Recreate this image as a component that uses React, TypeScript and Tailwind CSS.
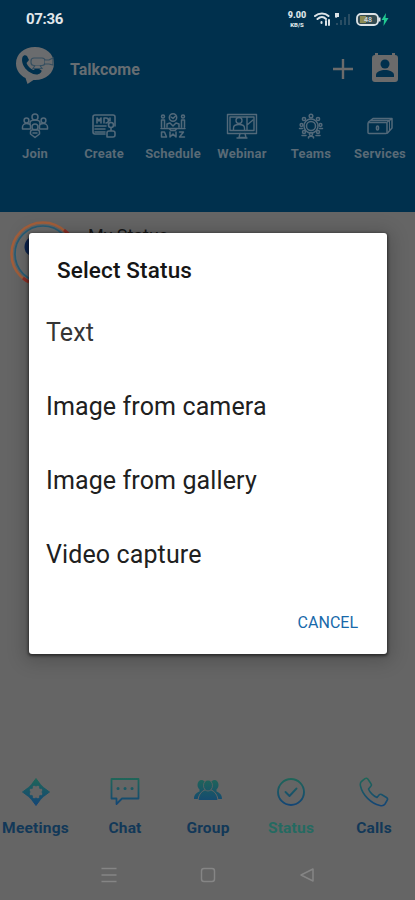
import React from "react";

const stroke = { fill: "none", strokeLinecap: "round", strokeLinejoin: "round" } as const;

function JoinIcon() {
  return (
    <svg className="h-[28px] w-[30px]" viewBox="0 0 30 28" stroke="#52697a" strokeWidth="1.5" {...stroke}>
      <circle cx="15" cy="5" r="3" />
      <path d="M10 12v-1c0-2 2-3 5-3s5 1 5 3v1" />
      <circle cx="6.500" cy="8.500" r="2.400" /><circle cx="23.500" cy="8.500" r="2.400" />
      <path d="M2.500 17v-2c0-2 2-3.500 4-3.500s4 1 4 2.500v3zM19.500 17v-3c0-1.500 2-2.500 4-2.500s4 1.500 4 3.500v2z" />
      <circle cx="15" cy="15" r="3" />
      <path d="M10.500 22v-2c0-1.500 2-2.500 4.500-2.500s4.500 1 4.500 2.500v2L15 25.500zM13 21h4" />
    </svg>
  );
}

function CreateIcon() {
  return (
    <svg className="h-[28px] w-[30px]" viewBox="0 0 30 28" stroke="#52697a" strokeWidth="1.600" {...stroke}>
      <path d="M16 22H6a2 2 0 0 1-2-2V5a2 2 0 0 1 2-2h18a2 2 0 0 1 2 2v9" />
      <path d="M8 11V6l2 3 2-3v5M15 11V6h2a2.500 2.500 0 0 1 0 5M21 6v3M6 14h11M6 17h10M6 20h10" />
      <circle cx="22" cy="13" r="2.500" />
      <path d="M22 16v2M18 25v-4a2 2 0 0 1 2-2h4a2 2 0 0 1 2 2v2a2 2 0 0 1-2 2z" />
    </svg>
  );
}

function ScheduleIcon() {
  return (
    <svg className="h-[28px] w-[30px]" viewBox="0 0 30 28" stroke="#52697a" strokeWidth="1.500" {...stroke}>
      <circle cx="15" cy="5.500" r="3.700" /><path d="M13 5l2 1.500L17.500 4" />
      <circle cx="5" cy="4.500" r="1.500" /><circle cx="25" cy="4.500" r="1.500" />
      <path d="M3.500 15V8h3v7M26.500 15V8h-3v7M9 15v-3l3-1 3 3 3-3 3 1v3M3 16.500h24M11 16.500l2 2h4l2-2" />
      <path d="M3.500 25v-5h3l2 5zM26.500 25h-5l4-5h-4M12 20v5l3-3 3 3v-5" />
    </svg>
  );
}

function WebinarIcon() {
  return (
    <svg className="h-[28px] w-[34px]" viewBox="0 0 34 28" stroke="#52697a" strokeWidth="1.400" {...stroke}>
      <path d="M2.500 2.500h29v19h-29zM5 5h24v13.500H5z" />
      <circle cx="14" cy="8.500" r="3" />
      <path d="M8.500 18v-2c0-2 2-3.500 5.500-3.500s5.500 1.500 5.500 3.500v2M22 13l6-5M22 5v13M15 21.500l-1 4h7l-1-4M12 26h10" />
    </svg>
  );
}

function TeamsIcon() {
  return (
    <svg className="h-[28px] w-[28px]" viewBox="0 0 28 28" stroke="#52697a" strokeWidth="1.500" {...stroke}>
      <circle cx="14" cy="14" r="4.500" /><circle cx="14" cy="14" r="7" />
      <circle cx="14" cy="4" r="1.800" /><circle cx="7" cy="7" r="1.600" /><circle cx="21" cy="7" r="1.600" />
      <circle cx="4.500" cy="13" r="1.400" /><circle cx="23.500" cy="13" r="1.400" />
      <circle cx="7" cy="20" r="1.500" /><circle cx="21" cy="20" r="1.500" /><circle cx="14" cy="22" r="1.600" />
      <path d="M11.500 26v-1l2.500-1 2.500 1v1M2.500 16.500h3M22.500 16.500h3M5 23.500h4M19 23.500h4" />
    </svg>
  );
}

function ServicesIcon() {
  return (
    <svg className="h-[28px] w-[30px]" viewBox="0 0 30 28" stroke="#52697a" strokeWidth="1.500" {...stroke}>
      <rect x="3" y="10.500" width="19" height="11" rx="1" />
      <path d="M3.500 10L8 6.500h19L22.500 10M27 6.500v9.500L22.500 21M6 8.500h18" />
      <path d="M24.500 9v9" strokeWidth="1" />
      <rect x="11.500" y="14" width="2" height="4" rx="1" />
    </svg>
  );
}

const actions = [
  { label: "Join", icon: <JoinIcon /> },
  { label: "Create", icon: <CreateIcon /> },
  { label: "Schedule", icon: <ScheduleIcon /> },
  { label: "Webinar", icon: <WebinarIcon /> },
  { label: "Teams", icon: <TeamsIcon /> },
  { label: "Services", icon: <ServicesIcon /> },
];

function BrandLogo() {
  return (
    <svg className="-mt-[6px] h-[40px] w-[40px]" viewBox="0 0 40 40">
      <path d="M20 1C9 1 1 8 1 17.500c0 6.500 4 12 9.500 14.500L12.500 38l6-4H20c11 0 19-7 19-16.500S31 1 20 1z" fill="#6a6c6e" />
      <path d="M7.500 11c1-2 3-2.500 4.500-1l2 4-2.500 3c1 3 4 6 7 7l3.500-2.500 4.500 3c.5 1.500-2 4-5 4C13 28 5 18.500 7.500 11z" fill="#00304d" />
      <g fill="#6a6c6e" stroke="#354f60" strokeWidth="1.200"><rect x="16" y="12" width="14" height="7.500" rx="3" /><path d="M30 14h4l4-2v7l-4-1h-4M20 19.500l-2 3h9l-2-3" /></g>
    </svg>
  );
}

function StatusBar() {
  return (
    <div className="flex h-[38px] items-center justify-between pl-[26px] pr-[26px]">
      <span className="text-[15px] font-bold tracking-[-0.3px] text-[#e0e7eb]">07:36</span>
      <div className="flex items-center">
        <div className="mr-[7px] flex w-[20px] flex-col items-center font-black text-[#dce3e7]">
          <span className="text-[9px] leading-[11px]">9.00</span>
          <span className="text-[6px] leading-[7px]">KB/S</span>
        </div>
        <svg className="h-[18px] w-[75px]" viewBox="0 0 75 18">
          <g fill="none" stroke="#dce3e7" strokeWidth="2" strokeLinecap="round">
            <path d="M1 6c4-3.500 10-3.500 13.500 0M3.500 9c3-2.500 6-2.500 8.500 0M7.500 12v1M12 11v4M15 10v5" />
          </g>
          <path d="M21 3h4v4h-1.500L22 8l-1-1z" fill="#dce3e7" />
          <path d="M23 15v-2M27 15v-5M31 15V7M35 15V4" stroke="#294d63" strokeWidth="2" />
          <rect x="43" y="4" width="21" height="11" rx="4" fill="#344c52" stroke="#dce3e7" strokeWidth="1.800" />
          <path d="M46 6h6v7h-6z" fill="#8b8b55" />
          <text x="50" y="12.300" fill="#c9d0d1" fontFamily="Roboto" fontWeight="700" fontSize="7">48</text>
          <path d="M65.500 7.500v4" stroke="#dce3e7" strokeWidth="2" />
          <path d="M72 3l-4.500 7H70l-.5 6 5-8h-3z" fill="#20c991" />
        </svg>
      </div>
    </div>
  );
}

function Header() {
  return (
    <header className="h-[212px] bg-[#00304d]">
      <StatusBar />
      <div className="flex h-[61px] items-center pl-[15px] pr-[16px]">
        <BrandLogo />
        <h1 className="ml-[15px] mt-[2px] flex-1 text-[16px] font-bold leading-5 text-[#666d72]">Talkcome</h1>
        <svg className="mr-[17px] h-[22px] w-[22px]" viewBox="0 0 22 22"><path d="M1 11h20M11 1v20" stroke="#6b6b6b" strokeWidth="2.400" /></svg>
        <svg className="-mt-[2px] h-[31px] w-[28px]" viewBox="0 0 28 31">
          <path d="M4 3V1h3v2h14V1h3v2a3 3 0 0 1 3 3v21a3 3 0 0 1-3 3H4a3 3 0 0 1-3-3V6a3 3 0 0 1 3-3z" fill="#6b6b6b" />
          <circle cx="14" cy="12" r="4.500" fill="#00304d" /><path d="M5 25v-2c0-3.500 5-5 9-5s9 1.500 9 5v2z" fill="#00304d" />
        </svg>
      </div>
      <nav className="grid grid-cols-[repeat(6,69px)] pt-[13px]">
        {actions.map((action) => (
          <div key={action.label} className="flex flex-col items-center gap-[6px] pl-px">
            {action.icon}
            <span className="whitespace-nowrap text-[13px] font-bold leading-4 tracking-[0.2px] text-[#596a76]">{action.label}</span>
          </div>
        ))}
      </nav>
    </header>
  );
}

const teal = "url(#tab-gradient)";
const tabs = [
  {
    label: "Meetings",
    color: "text-[#123858]",
    icon: (
      <g stroke={teal} strokeLinejoin="round">
        <path d="M15 4.500L25.500 15 15 25.500 4.500 15z" fill="none" strokeWidth="2.600" />
        <path d="M15 1.500l4 5.500-4 2-4-2zM28.500 15L23 19l-2-4 2-4zM15 28.500L11 23l4-2 4 2zM1.500 15L7 11l2 4-2 4z" fill={teal} strokeWidth="1" />
        <path d="M9.500 9.500l2 2M20.500 9.500l-2 2M20.500 20.500l-2-2M9.500 20.500l2-2" fill="none" strokeWidth="1.800" />
      </g>
    ),
  },
  {
    label: "Chat",
    color: "text-[#123858]",
    icon: <g stroke={teal} strokeWidth="1.800" {...stroke}><path d="M1.500 2h27v19.500H12L6.500 27v-5.500h-5z" /><path d="M8 11.500h.1M15 11.500h.1M22 11.500h.1" strokeWidth="3" /></g>,
  },
  {
    label: "Group",
    color: "text-[#123858]",
    icon: (
      <g fill={teal}>
        <ellipse cx="8.500" cy="8" rx="4" ry="5" /><ellipse cx="21.500" cy="8" rx="4" ry="5" />
        <path d="M6.500 11h5v5l-3 6H1c0-4 2-6 5.500-7.500zM23.500 11h-5v5l3 6H29c0-4-2-6-5.500-7.500z" />
        <path d="M15 12.500c-5 0-9.500 4-10 11h20c-.5-7-5-11-10-11z" stroke="#656565" />
        <ellipse cx="15" cy="8.500" rx="4.500" ry="5.500" stroke="#656565" strokeWidth=".8" />
      </g>
    ),
  },
  {
    label: "Status",
    color: "text-[#246a61]",
    icon: <g stroke={teal} strokeWidth="1.900" {...stroke}><circle cx="15" cy="15" r="13" /><path d="M9.500 15l4 4 7-7.500" /></g>,
  },
  {
    label: "Calls",
    color: "text-[#123858]",
    icon: <g stroke={teal} strokeWidth="1.600" {...stroke}><path d="M3 4l3-2.300c1-.7 2.300-.5 3 .5l3 4.500c.7 1 .5 2-.4 2.700L9.500 12c1 3 5 7 8.500 8.500l2-2.500c.7-.7 1.600-1 2.500-.5l5 3c1 .600 1.300 1.600.8 2.500L26 27c-1 1.500-3 2-5 1.500C12 26.500 3.500 18 1.500 9 1 7 1.500 5 3 4z" /></g>,
  },
];

function BottomTabs() {
  return (
    <nav className="grid grid-cols-[71px_108px_58px_108px_58px] pt-[9px]">
      {tabs.map((tab) => (
        <div key={tab.label} className="flex flex-col items-center gap-[11px]">
          <svg className="h-[30px] w-[30px]" viewBox="0 0 30 30">
            <defs><linearGradient id="tab-gradient" gradientUnits="userSpaceOnUse" x1="0" y1="0" x2="0" y2="30"><stop stopColor="#206757" /><stop offset="1" stopColor="#124377" /></linearGradient></defs>
            {tab.icon}
          </svg>
          <span className={"whitespace-nowrap text-[15.5px] font-bold leading-5 tracking-[0.2px] " + tab.color}>{tab.label}</span>
        </div>
      ))}
    </nav>
  );
}

function SystemBar() {
  return (
    <div className="flex h-[50px] items-center justify-center gap-[83px] text-[#858585]">
      <svg className="h-4 w-4" viewBox="0 0 16 16"><path d="M.5 1.500h15M.5 8h15M.5 14.500h15" stroke="currentColor" strokeWidth="1.500" /></svg>
      <svg className="h-4 w-4" viewBox="0 0 16 16"><rect x="1.500" y="1.500" width="13" height="13" rx="2.500" fill="none" stroke="currentColor" strokeWidth="1.500" /></svg>
      <svg className="h-4 w-4" viewBox="0 0 16 16"><path d="M14 2v12L2 8z" fill="none" stroke="currentColor" strokeWidth="1.500" strokeLinejoin="round" /></svg>
    </div>
  );
}

const options = [
  { label: "Text", className: "text-[#353535]" },
  { label: "Image from camera", className: "text-[#202020]" },
  { label: "Image from gallery", className: "text-[#202020]" },
  { label: "Video capture", className: "text-[#202020]" },
];

function StatusDialog() {
  return (
    <div role="dialog" className="absolute left-[29px] top-[233px] flex h-[421px] w-[358px] flex-col rounded-[3px] bg-white shadow-[0_3px_18px_5px_rgba(0,0,0,0.18),0_1px_3px_1px_rgba(0,0,0,0.5)]">
      <h2 className="pl-[28px] pt-[22px] text-[22.5px] font-medium leading-[30px] tracking-[0.15px] text-[#151515]">Select Status</h2>
      <ul className="mt-[11px]">
        {options.map((option) => (
          <li key={option.label} className={"flex h-[74px] items-center pl-[17px] text-[25px] tracking-[0.12px] " + option.className}>{option.label}</li>
        ))}
      </ul>
      <button className="mr-[29px] mt-[21px] self-end text-[16px] leading-5 text-[#1769aa]">CANCEL</button>
    </div>
  );
}

export default function App() {
  return (
    <div className="relative flex h-[900px] w-[415px] flex-col overflow-hidden bg-[#656565] font-['Roboto',sans-serif]">
      <Header />
      <main className="flex h-[556px] items-start pl-[10px] pt-[8px]">
        <svg className="h-[68px] w-[68px]" viewBox="0 0 68 68">
          <circle cx="33" cy="34" r="31.500" fill="none" stroke="#a35f3b" strokeWidth="2.500" />
          <path d="M54 10a32 32 0 0 1 6 6M13 58a32 32 0 0 0 6 4" fill="none" stroke="#8e3028" strokeWidth="3" />
          <circle cx="33" cy="34" r="28" fill="#6b6b6b" stroke="#285e77" strokeWidth="1.700" />
          <path d="M19 18c-6 4-6 14 0 17z" fill="#0b2450" />
        </svg>
        <span className="ml-[10px] mt-[4px] text-[18px] leading-6 text-[#171717]">My Status</span>
      </main>
      <footer className="flex h-[132px] flex-col justify-between">
        <BottomTabs />
        <SystemBar />
      </footer>
      <StatusDialog />
    </div>
  );
}
